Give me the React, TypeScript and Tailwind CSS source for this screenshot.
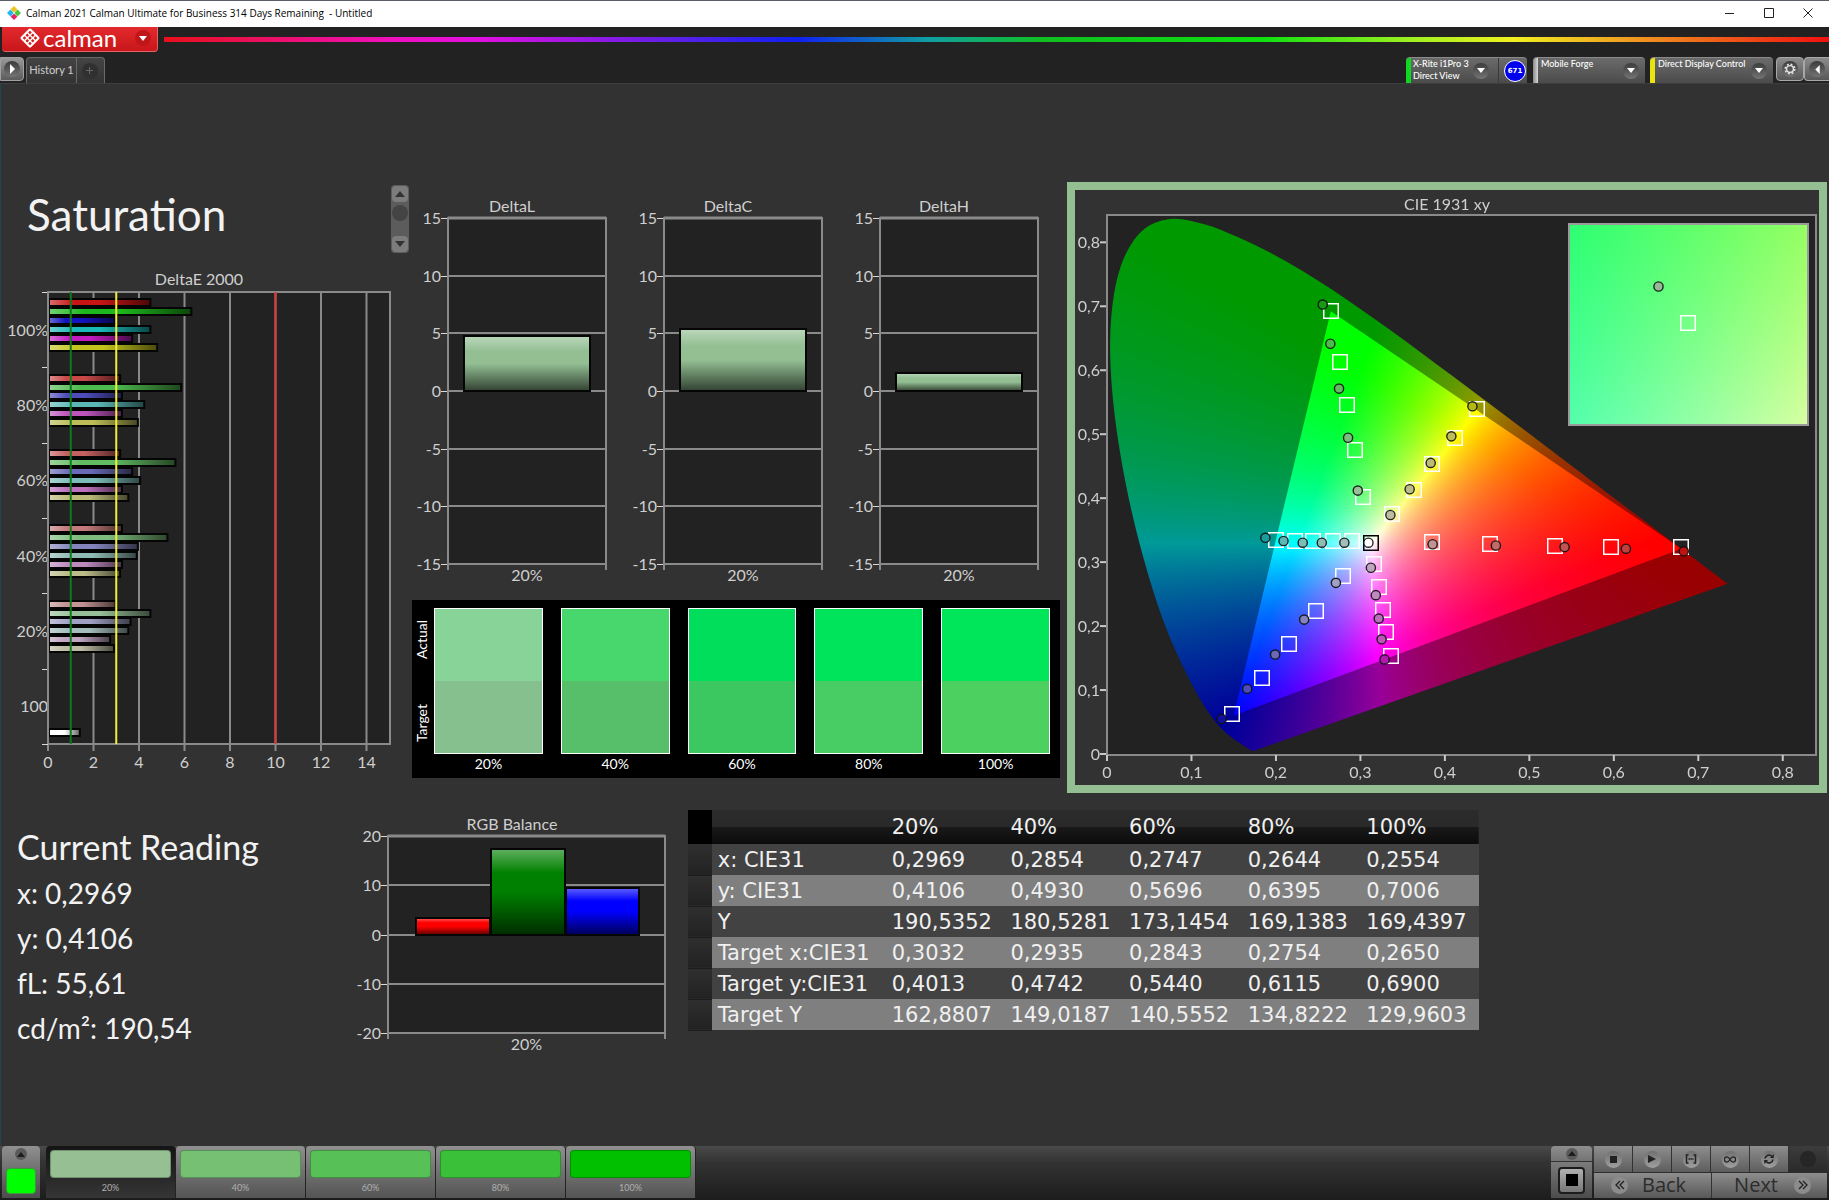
import { useEffect, useRef } from "react";
import type { ReactNode } from "react";

/* ---------- shared chart pieces ---------- */

const AXIS = "#8a8a8a";
const LABEL = "#cfcfcf";
const PLOT = "#222222";

function GlossDefs({ id }: { id: string }) {
  return (
    <defs>
      <linearGradient id={`${id}-v`} x1="0" y1="0" x2="0" y2="1">
        <stop offset="0" stopColor="#fff" stopOpacity="0.38" />
        <stop offset="0.28" stopColor="#fff" stopOpacity="0" />
        <stop offset="0.5" stopColor="#000" stopOpacity="0" />
        <stop offset="1" stopColor="#000" stopOpacity="0.66" />
      </linearGradient>
      <linearGradient id={`${id}-h`} x1="0" y1="0" x2="1" y2="0">
        <stop offset="0" stopColor="#fff" stopOpacity="0.38" />
        <stop offset="0.25" stopColor="#fff" stopOpacity="0" />
        <stop offset="0.5" stopColor="#000" stopOpacity="0" />
        <stop offset="1" stopColor="#000" stopOpacity="0.62" />
      </linearGradient>
    </defs>
  );
}

type Bar = { x: number; width: number; value: number; color: string };

type ColumnChartProps = {
  id: string;
  title: string;
  width: number;
  height: number;
  plot: { left: number; right: number; top: number; bottom: number };
  titleX: number;
  max: number;
  step: number;
  bars: Bar[];
};

function ColumnChart({ id, title, width, height, plot, titleX, max, step, bars }: ColumnChartProps) {
  const mid = (plot.top + plot.bottom) / 2;
  const unit = (plot.bottom - plot.top) / (2 * max);
  const yOf = (v: number) => Math.round(mid - v * unit);
  const ticks: number[] = [];
  for (let v = max; v >= -max; v -= step) ticks.push(v);
  return (
    <svg viewBox={`0 0 ${width} ${height}`} className="block h-auto w-full font-['Lato',sans-serif] text-[16px]" role="img" aria-label={title}>
      <GlossDefs id={id} />
      <text x={titleX} y={plot.top - 6} textAnchor="middle" fill={LABEL}>{title}</text>
      <rect x={plot.left} y={plot.top} width={plot.right - plot.left} height={plot.bottom - plot.top} fill={PLOT} />
      {ticks.map((v) => (
        <g key={v}>
          <line x1={plot.left} x2={plot.right} y1={yOf(v)} y2={yOf(v)} stroke={AXIS} strokeWidth={v === max ? 3 : 2} />
          <line x1={plot.left - 7} x2={plot.left} y1={yOf(v) + 0.5} y2={yOf(v) + 0.5} stroke="#d8d8d8" strokeWidth="1" />
          <text x={plot.left - 7} y={yOf(v) + 6} textAnchor="end" fill={LABEL}>{v}</text>
        </g>
      ))}
      <line x1={plot.left} x2={plot.left} y1={plot.top - 1} y2={plot.bottom + 6} stroke={AXIS} strokeWidth="2" />
      <line x1={plot.right} x2={plot.right} y1={plot.top - 1} y2={plot.bottom + 6} stroke={AXIS} strokeWidth="2" />
      {bars.map((b) => (
        <g key={b.x}>
          <rect x={b.x} y={yOf(b.value)} width={b.width} height={yOf(0) - yOf(b.value)} fill={b.color} />
          <rect x={b.x} y={yOf(b.value)} width={b.width} height={yOf(0) - yOf(b.value)} fill={`url(#${id}-v)`} stroke="#050505" strokeWidth="2" />
        </g>
      ))}
      <text x={(plot.left + plot.right) / 2} y={plot.bottom + 17} textAnchor="middle" fill={LABEL}>20%</text>
    </svg>
  );
}

/* ---------- DeltaE 2000 ---------- */

const deltaE = [
  { label: "100%", bars: [["#c81414", 4.5], ["#1db81d", 6.3], ["#1414c0", 2.95], ["#1ab8b8", 4.5], ["#c01ac0", 3.7], ["#c4c41e", 4.8]] },
  { label: "80%", bars: [["#c84848", 3.17], ["#4cba4c", 5.85], ["#4c4cba", 3.25], ["#5cb8b8", 4.23], ["#bc54bc", 3.25], ["#bcbc58", 3.95]] },
  { label: "60%", bars: [["#c46060", 3.17], ["#62bc62", 5.6], ["#6a6ab8", 3.7], ["#7cbcb8", 4.05], ["#bc70bc", 3.25], ["#bcbc78", 3.53]] },
  { label: "40%", bars: [["#c47a7a", 3.25], ["#7cbc7c", 5.25], ["#8484bc", 3.95], ["#90bab4", 3.9], ["#be8abe", 3.25], ["#bcbc8a", 3.17]] },
  { label: "20%", bars: [["#c49494", 2.97], ["#98c098", 4.5], ["#a0a0c4", 3.63], ["#a4bcbc", 3.53], ["#c0a4c0", 2.73], ["#bcbca4", 2.9]] },
  { label: "100", bars: [["#ffffff", 1.4]] },
] as { label: string; bars: [string, number][] }[];

function DeltaEChart() {
  const left = 48;
  const right = 390;
  const top = 22;
  const bottom = 474;
  const group = (bottom - top) / 6;
  const xOf = (v: number) => left + v * 22.75;
  return (
    <svg viewBox="0 0 412 510" className="block h-auto w-full font-['Lato',sans-serif] text-[16px]" role="img" aria-label="DeltaE 2000">
      <GlossDefs id="de" />
      <text x="199" y="15" textAnchor="middle" fill={LABEL}>DeltaE 2000</text>
      <rect x={left} y={top} width={right - left} height={bottom - top} fill={PLOT} stroke={AXIS} strokeWidth="2" />
      {[0, 2, 4, 6, 8, 10, 12, 14].map((v) => (
        <g key={v}>
          <line x1={xOf(v)} x2={xOf(v)} y1={top} y2={bottom + 7} stroke={AXIS} strokeWidth="2" />
          <text x={xOf(v)} y={bottom + 24} textAnchor="middle" fill={LABEL}>{v}</text>
        </g>
      ))}
      {[0, 1, 2, 3, 4, 5, 6].map((i) => (
        <line key={i} x1={left - 6} x2={left} y1={Math.round(top + i * group) + 0.5} y2={Math.round(top + i * group) + 0.5} stroke="#d8d8d8" />
      ))}
      {deltaE.map((g, gi) => (
        <g key={g.label}>
          <text x={left} y={top + (gi + 0.5) * group + 6} textAnchor="end" fill={LABEL}>{g.label}</text>
          {g.bars.map(([color, value], bi) => {
            const slot = g.bars.length === 1 ? 6 : bi;
            const y = Math.round(top + gi * group + 7.3 + slot * 8.9);
            return (
              <g key={bi}>
                <rect x={left + 1} y={y} width={xOf(value) - left - 1} height="7" fill={color} />
                <rect x={left + 1} y={y} width={xOf(value) - left - 1} height="7" fill="url(#de-h)" stroke="#050505" strokeWidth="2" />
              </g>
            );
          })}
        </g>
      ))}
      <line x1={left} x2={left} y1={top} y2={bottom} stroke={AXIS} strokeWidth="2" />
      <line x1={xOf(1)} x2={xOf(1)} y1={top} y2={bottom} stroke="#0e7a1c" strokeWidth="2" />
      <line x1={xOf(3)} x2={xOf(3)} y1={top} y2={bottom} stroke="#f2ee3c" strokeWidth="2" />
      <line x1={xOf(10)} x2={xOf(10)} y1={top} y2={bottom} stroke="#e03432" strokeWidth="2" />
    </svg>
  );
}

/* ---------- CIE 1931 xy ---------- */

type Point = [number, number];

const locus: Point[] = [
  [0.1741, 0.005], [0.1714, 0.0051], [0.1689, 0.0069], [0.1644, 0.0109], [0.1611, 0.0138], [0.1566, 0.0177],
  [0.151, 0.0227], [0.144, 0.0297], [0.1355, 0.0399], [0.1241, 0.0578], [0.1096, 0.0868], [0.0913, 0.1327],
  [0.0687, 0.2007], [0.0454, 0.295], [0.0235, 0.4127], [0.0082, 0.5384], [0.0039, 0.6548], [0.0139, 0.7502],
  [0.0389, 0.812], [0.0743, 0.8338], [0.1142, 0.8262], [0.1547, 0.8059], [0.1929, 0.7816], [0.2296, 0.7543],
  [0.2658, 0.7243], [0.3016, 0.6923], [0.3373, 0.6589], [0.3731, 0.6245], [0.4087, 0.5896], [0.4441, 0.5547],
  [0.4788, 0.5202], [0.5125, 0.4866], [0.5448, 0.4544], [0.5752, 0.4242], [0.6029, 0.3965], [0.627, 0.3725],
  [0.6482, 0.3514], [0.6658, 0.334], [0.6915, 0.3083], [0.7079, 0.292], [0.719, 0.2809], [0.726, 0.274],
  [0.7347, 0.2653],
];
const gamut: Point[] = [[0.68, 0.32], [0.265, 0.69], [0.15, 0.06]];

const series: { colors: string[]; target: Point[]; actual: Point[] }[] = [
  {
    colors: ["#98c098", "#7cbc7c", "#62bc62", "#4cba4c", "#169a16"],
    target: [[0.3032, 0.4013], [0.2935, 0.4742], [0.2843, 0.544], [0.2754, 0.6115], [0.265, 0.69]],
    actual: [[0.2969, 0.4106], [0.2854, 0.493], [0.2747, 0.5696], [0.2644, 0.6395], [0.2554, 0.7006]],
  },
  {
    colors: ["#c09494", "#c06a6a", "#c05454", "#c04040", "#c01414"],
    target: [[0.385, 0.33], [0.454, 0.327], [0.53, 0.325], [0.597, 0.323], [0.68, 0.3226]],
    actual: [[0.3855, 0.327], [0.4604, 0.325], [0.5417, 0.3226], [0.6143, 0.32], [0.6828, 0.316]],
  },
  {
    colors: ["#a4bcbc", "#90bab4", "#7cbcb8", "#5cb8b8", "#1a9c9c"],
    target: [[0.29, 0.332], [0.267, 0.332], [0.244, 0.332], [0.223, 0.332], [0.2, 0.334]],
    actual: [[0.281, 0.3294], [0.2543, 0.3294], [0.2317, 0.3294], [0.209, 0.332], [0.1875, 0.337]],
  },
  {
    colors: ["#a0a0c4", "#8484bc", "#6a6ab8", "#4c4cba", "#10109c"],
    target: [[0.279, 0.278], [0.2473, 0.223], [0.2154, 0.1715], [0.184, 0.118], [0.148, 0.062]],
    actual: [[0.271, 0.2668], [0.2334, 0.2095], [0.199, 0.155], [0.166, 0.1016], [0.1359, 0.0547]],
  },
  {
    colors: ["#c0a4c0", "#be8abe", "#bc70bc", "#bc54bc", "#b01ab0"],
    target: [[0.3164, 0.2955], [0.3217, 0.2606], [0.3269, 0.2246], [0.3298, 0.1897], [0.3362, 0.1522]],
    actual: [[0.3124, 0.2903], [0.3182, 0.2476], [0.3217, 0.2111], [0.3251, 0.1788], [0.3286, 0.1475]],
  },
  {
    colors: ["#bcbca4", "#bcbc8a", "#bcbc78", "#bcbc58", "#b8b814"],
    target: [[0.337, 0.3735], [0.3631, 0.4113], [0.3849, 0.4517], [0.4116, 0.4933], [0.4376, 0.5376]],
    actual: [[0.3355, 0.3726], [0.3583, 0.4127], [0.3832, 0.4538], [0.4077, 0.4952], [0.4326, 0.542]],
  },
];

const CIE_W = 744;
const CIE_H = 595;
const SCALE_X = 844.7;
const SCALE_Y = 641.5;
const cieX = (x: number) => 32 + x * SCALE_X;
const cieY = (y: number) => 564 - y * SCALE_Y;
const tickY = (y: number) => 564 - y * 639.6;
const INSET = { x: 494, y: 34, w: 239, h: 201 };

function chromaticity(x: number, y: number): [number, number, number] {
  const yy = Math.max(y, 0.001);
  const X = x / yy;
  const Z = (1 - x - yy) / yy;
  const r = Math.max(0, 3.2406 * X - 1.5372 - 0.4986 * Z);
  const g = Math.max(0, -0.9689 * X + 1.8758 + 0.0415 * Z);
  const b = Math.max(0, 0.0557 * X - 0.204 + 1.057 * Z);
  const m = Math.max(r, g, b, 0.0001);
  return [(r / m) * 255, (g / m) * 255, (b / m) * 255];
}

function fillLayer(w: number, h: number, at: (px: number, py: number) => Point, gain: number) {
  const layer = document.createElement("canvas");
  layer.width = w;
  layer.height = h;
  const ctx = layer.getContext("2d")!;
  const image = ctx.createImageData(w, h);
  for (let py = 0; py < h; py++) {
    for (let px = 0; px < w; px++) {
      const [x, y] = at(px, py);
      const [r, g, b] = chromaticity(x, y);
      const i = (py * w + px) * 4;
      image.data[i] = r * gain;
      image.data[i + 1] = g * gain;
      image.data[i + 2] = b * gain;
      image.data[i + 3] = 255;
    }
  }
  ctx.putImageData(image, 0, 0);
  return layer;
}

/* Catmull-Rom curve through every point of the spectral locus. */
function traceLocus(ctx: CanvasRenderingContext2D) {
  const pts = locus.map(([x, y]): Point => [cieX(x), cieY(y)]);
  ctx.beginPath();
  ctx.moveTo(pts[0][0], pts[0][1]);
  for (let i = 0; i < pts.length - 1; i++) {
    const p0 = pts[Math.max(i - 1, 0)];
    const p1 = pts[i];
    const p2 = pts[i + 1];
    const p3 = pts[Math.min(i + 2, pts.length - 1)];
    ctx.bezierCurveTo(
      p1[0] + (p2[0] - p0[0]) / 6, p1[1] + (p2[1] - p0[1]) / 6,
      p2[0] - (p3[0] - p1[0]) / 6, p2[1] - (p3[1] - p1[1]) / 6,
      p2[0], p2[1],
    );
  }
  ctx.closePath();
}

function CieCanvas() {
  const ref = useRef<HTMLCanvasElement>(null);
  useEffect(() => {
    const ctx = ref.current?.getContext("2d");
    if (!ctx) return;
    ctx.fillStyle = PLOT;
    ctx.fillRect(32, 25, 709, 540);
    const at = (px: number, py: number): Point => [(px - 32) / SCALE_X, (564 - py) / SCALE_Y];

    ctx.save();
    traceLocus(ctx);
    ctx.clip();
    ctx.drawImage(fillLayer(CIE_W, CIE_H, at, 0.6), 0, 0);
    ctx.beginPath();
    gamut.forEach(([x, y], i) => (i ? ctx.lineTo(cieX(x), cieY(y)) : ctx.moveTo(cieX(x), cieY(y))));
    ctx.closePath();
    ctx.clip();
    ctx.drawImage(fillLayer(CIE_W, CIE_H, at, 1), 0, 0);
    ctx.restore();

    const zoomed = (px: number, py: number): Point => [
      0.3032 + (px - INSET.w / 2) / 4680,
      0.4013 - (py - INSET.h / 2) / 3980,
    ];
    ctx.drawImage(fillLayer(INSET.w, INSET.h, zoomed, 1), INSET.x, INSET.y);
  }, []);
  return <canvas ref={ref} width={CIE_W} height={CIE_H} className="absolute inset-0 h-full w-full" aria-hidden="true" />;
}

function TargetMark({ x, y, stroke = "#fff" }: { x: number; y: number; stroke?: string }) {
  return <rect x={Math.round(x) - 7.25} y={Math.round(y) - 7.25} width="14.5" height="14.5" fill="none" stroke={stroke} strokeWidth="1.5" />;
}

function ActualMark({ x, y, fill }: { x: number; y: number; fill: string }) {
  return <circle cx={x} cy={y} r="4.6" fill={fill} stroke="#111" strokeOpacity="0.9" strokeWidth="1.4" />;
}

function CieChart() {
  const marks = [0, 1, 2, 3, 4, 5, 6, 7, 8];
  const fmt = (v: number) => (v === 0 ? "0" : `0,${v}`);
  return (
    <figure className="relative">
      <CieCanvas />
      <svg viewBox={`0 0 ${CIE_W} ${CIE_H}`} className="relative block h-auto w-full font-['Lato',sans-serif] text-[16px]" role="img" aria-label="CIE 1931 xy">
        <text x="372" y="20" textAnchor="middle" fill={LABEL}>CIE 1931 xy</text>
        <rect x="32" y="25" width="709" height="540" fill="none" stroke={AXIS} strokeWidth="2" />
        {marks.map((v) => (
          <g key={v}>
            <line x1={cieX(v / 10)} x2={cieX(v / 10)} y1="565" y2="571" stroke="#c8c8c8" strokeWidth="2" />
            <text x={cieX(v / 10)} y="588" textAnchor="middle" fill={LABEL}>{fmt(v)}</text>
            <line x1="25" x2="31" y1={tickY(v / 10)} y2={tickY(v / 10)} stroke="#c8c8c8" strokeWidth="2" />
            <text x="25" y={tickY(v / 10) + 6} textAnchor="end" fill={LABEL}>{fmt(v)}</text>
          </g>
        ))}
        {series.map((s, si) => (
          <g key={si}>
            {s.target.map(([x, y], i) => <TargetMark key={i} x={cieX(x)} y={cieY(y)} />)}
            {s.actual.map(([x, y], i) => <ActualMark key={i} x={cieX(x)} y={cieY(y)} fill={s.colors[i]} />)}
          </g>
        ))}
        <TargetMark x={cieX(0.3127)} y={cieY(0.329)} stroke="#000" />
        <ActualMark x={cieX(0.3095)} y={cieY(0.3294)} fill="#fff" />
        <rect x={INSET.x} y={INSET.y} width={INSET.w} height={INSET.h} fill="none" stroke="#9a9a9a" strokeWidth="2" />
        <TargetMark x={613} y={133} />
        <ActualMark x={583.5} y={96.5} fill="#98b898" />
      </svg>
    </figure>
  );
}

/* ---------- swatches and table ---------- */

const swatches = [
  { label: "20%", actual: "bg-[#88d398]", target: "bg-[#87c08f]", tab: "bg-[#96c093]" },
  { label: "40%", actual: "bg-[#47d76d]", target: "bg-[#57bf69]", tab: "bg-[#76c074]" },
  { label: "60%", actual: "bg-[#00de5c]", target: "bg-[#3cc860]", tab: "bg-[#57c057]" },
  { label: "80%", actual: "bg-[#00e45c]", target: "bg-[#48cc64]", tab: "bg-[#3bc03a]" },
  { label: "100%", actual: "bg-[#00e65a]", target: "bg-[#4cd060]", tab: "bg-[#00c000]" },
];

function SwatchPanel() {
  return (
    <section className="mt-2 mr-[7px] flex bg-black pt-2 pr-[10px] pb-1 font-['Lato',sans-serif] text-[14px] text-white">
      <div className="flex h-[146px] w-[22px] flex-col items-start justify-between py-3">
        <span className="rotate-180 leading-5 [writing-mode:vertical-rl]">Actual</span>
        <span className="rotate-180 leading-5 [writing-mode:vertical-rl]">Target</span>
      </div>
      <div className="grid flex-1 grid-cols-5 gap-[18px]">
        {swatches.map((s) => (
          <div key={s.label}>
            <div className="flex h-[146px] flex-col border border-white">
              <div className={`flex-1 ${s.actual}`} />
              <div className={`flex-1 ${s.target}`} />
            </div>
            <p className="text-center leading-5">{s.label}</p>
          </div>
        ))}
      </div>
    </section>
  );
}

const rows = [
  ["x: CIE31", "0,2969", "0,2854", "0,2747", "0,2644", "0,2554"],
  ["y: CIE31", "0,4106", "0,4930", "0,5696", "0,6395", "0,7006"],
  ["Y", "190,5352", "180,5281", "173,1454", "169,1383", "169,4397"],
  ["Target x:CIE31", "0,3032", "0,2935", "0,2843", "0,2754", "0,2650"],
  ["Target y:CIE31", "0,4013", "0,4742", "0,5440", "0,6115", "0,6900"],
  ["Target Y", "162,8807", "149,0187", "140,5552", "134,8222", "129,9603"],
];

function ReadingsTable() {
  return (
    <table className="mt-4 w-full table-fixed border-collapse text-left font-['DejaVu_Sans',sans-serif] text-[21px] text-[#f0f0f0]">
      <colgroup>
        <col className="w-[3%]" />
        <col className="w-[22%]" />
        <col className="w-[15%]" />
        <col className="w-[15%]" />
        <col className="w-[15%]" />
        <col className="w-[15%]" />
        <col className="w-[15%]" />
      </colgroup>
      <thead>
        <tr className="h-[34px] bg-[linear-gradient(#2b2b2b,#292929_50%,#191919_50%,#0c0c0c)]">
          <td className="bg-black" />
          <td />
          {swatches.map((s) => (
            <th key={s.label} scope="col" className="p-0 pl-[6px] font-normal leading-[30px]">{s.label}</th>
          ))}
        </tr>
      </thead>
      <tbody>
        {rows.map(([name, ...values], i) => (
          <tr key={name} className={i % 2 ? "h-[31px] bg-[#7f7f7f]" : "h-[31px] bg-[#424242]"}>
            <td className="border-b border-[#1c1c1c] bg-linear-to-b from-[#2f2f2f] to-[#222]" />
            <th scope="row" className="p-0 pl-[6px] font-normal whitespace-nowrap leading-[30px]">{name}</th>
            {values.map((v, vi) => (
              <td key={vi} className="p-0 pl-[6px] leading-[30px]">{v}</td>
            ))}
          </tr>
        ))}
      </tbody>
    </table>
  );
}

/* ---------- window chrome ---------- */

function RoundDot({ children, className = "" }: { children?: ReactNode; className?: string }) {
  return (
    <span className={`flex size-4 shrink-0 items-center justify-center rounded-full bg-linear-to-b from-[#3c3c3c] to-[#757575] ${className}`}>
      {children}
    </span>
  );
}

function DownArrow() {
  return (
    <svg viewBox="0 0 8 5" className="h-[5px] w-2" aria-hidden="true">
      <path d="M0 0h8L4 5z" fill="#fff" />
    </svg>
  );
}

function TitleBar() {
  return (
    <header className="flex h-[27px] items-center border-t border-[#5a5f66] bg-white pr-[2px] pb-[2px] pl-[7px] text-black">
      <svg viewBox="0 0 14 14" className="size-[14px]" aria-hidden="true">
        <path d="M7 0l3.300 3.300L7 6.600 3.700 3.300z" fill="#f2c21a" />
        <path d="M3.500 3.500L7 7l-3.500 3.500L0 7z" fill="#22b6e8" />
        <path d="M10.500 3.500L14 7l-3.500 3.500L7 7z" fill="#4cc83a" />
        <path d="M7 7.400l3.300 3.300L7 14l-3.300-3.300z" fill="#e8206a" />
        <path d="M7 5.500L8.500 7 7 8.500 5.500 7z" fill="#fff" fillOpacity="0.6" />
      </svg>
      <h1 className="ml-[5px] flex-1 font-['Open_Sans',sans-serif] text-[10px] whitespace-pre">
        {"Calman 2021 Calman Ultimate for Business 314 Days Remaining  - Untitled"}
      </h1>
      <button aria-label="Minimize" className="flex h-full w-[39px] items-center justify-center">
        <svg viewBox="0 0 10 10" className="size-[10px]"><path d="M0 5.500h9" stroke="#222" /></svg>
      </button>
      <button aria-label="Maximize" className="flex h-full w-[39px] items-center justify-center">
        <svg viewBox="0 0 10 10" className="size-[10px]"><path d="M.5.5h9v9h-9z" fill="none" stroke="#222" /></svg>
      </button>
      <button aria-label="Close" className="flex h-full w-[39px] items-center justify-center">
        <svg viewBox="0 0 10 10" className="size-[10px]"><path d="M.5.5l9 9M9.500.5l-9 9" stroke="#222" /></svg>
      </button>
    </header>
  );
}

function BrandBar() {
  return (
    <div className="flex h-[29px] items-start bg-[#222]">
      <button className="ml-[2px] flex h-[25px] w-[156px] items-center rounded-b border-r border-b border-[#e89090]/60 bg-linear-to-b from-[#e32a2e] to-[#c81519] pb-[2px] pl-[18px] text-white">
        <svg viewBox="0 0 20 20" className="size-5" aria-hidden="true">
          <g transform="rotate(45 10 10)">
            <rect x="2.800" y="2.800" width="14.400" height="14.400" rx="1.800" fill="#fff" />
            {[4.8, 8.7, 12.6].map((cy) =>
              [4.8, 8.7, 12.6].map((cx) => <rect key={`${cx}-${cy}`} x={cx} y={cy} width="2.600" height="2.600" rx=".4" fill="#d4201f" />),
            )}
          </g>
        </svg>
        <span className="ml-[3px] font-['Lato',sans-serif] text-2xl leading-[22px]">calman</span>
        <span className="mr-[6px] ml-auto flex size-4 items-center justify-center rounded-full bg-[#c0161a]">
          <DownArrow />
        </span>
      </button>
      <div className="mt-[10px] ml-[6px] h-[5px] flex-1 bg-[linear-gradient(90deg,#e8101c,#f010c0_14%,#e010e0_19%,#5a20e8_31%,#1020f0_38%,#10a0a0_46%,#10c020_53%,#10e010_66%,#a0f020_75%,#f0f020_81%,#f09020_89%,#f01010)]" />
    </div>
  );
}

function Device({ children, bar, className }: { children: ReactNode; bar: string; className: string }) {
  return (
    <button
      aria-haspopup="listbox"
      className={`flex h-[26px] items-stretch rounded-t border-t border-[#8a8a8a] bg-linear-to-b from-[#6b6b6b] to-[#4b4b4b] text-left font-['Lato',sans-serif] text-[9px] leading-3 font-medium text-white ${className}`}
    >
      <span className={`w-[5px] shrink-0 rounded-tl ${bar}`} />
      {children}
    </button>
  );
}

function ToolRow() {
  return (
    <div className="flex h-[27px] items-end justify-between bg-[#222]">
      <nav className="flex items-end font-['Lato',sans-serif] text-[11px] text-[#d0d0d0]">
        <button aria-label="Play" className="mr-[2px] mb-[2px] flex h-6 w-6 items-center justify-center rounded-r border border-[#a0a0a0] bg-linear-to-b from-[#9a9a9a] to-[#5c5c5c]">
          <RoundDot><svg viewBox="0 0 6 10" className="h-[10px] w-[6px]"><path d="M1 0l5 5-5 5z" fill="#fff" /></svg></RoundDot>
        </button>
        <button className="h-[26px] w-[50px] rounded-tl border-t border-l border-[#6a6a6a] bg-linear-to-b from-[#444] to-[#333] whitespace-nowrap">History 1</button>
        <button aria-label="Add history" className="flex h-[26px] w-[29px] items-center justify-center rounded-tr border border-b-0 border-[#6a6a6a] bg-linear-to-b from-[#444] to-[#333] pr-[2px]">
          <span className="flex size-4 items-center justify-center rounded-full bg-[#303030]">
            <svg viewBox="0 0 7 7" className="size-[7px]"><path d="M3.500 0v7M0 3.500h7" stroke="#666" /></svg>
          </span>
        </button>
      </nav>
      <div className="flex items-end">
        <Device bar="bg-[#10d820]" className="mr-[6px] w-[121px]">
          <span className="ml-[2px] w-[60px] whitespace-nowrap">X-Rite i1Pro 3<br />Direct View</span>
          <RoundDot className="self-center"><DownArrow /></RoundDot>
          <span className="ml-[9px] w-px bg-[#3a3a3a]" />
          <span className="my-auto mr-px ml-auto flex size-[22px] items-center justify-center rounded-full border border-white bg-[#0000ee] font-['DejaVu_Sans',sans-serif] text-[7px] font-bold">671</span>
        </Device>
        <Device bar="bg-linear-to-r from-[#8a8a8a] to-[#d8d8d8]" className="mr-[5px] w-[112px]">
          <span className="ml-[3px] flex-1">Mobile Forge</span>
          <RoundDot className="mr-[6px] self-center"><DownArrow /></RoundDot>
        </Device>
        <Device bar="bg-[#e8e410]" className="mr-[3px] w-[123px]">
          <span className="ml-[3px] flex-1 whitespace-nowrap">Direct Display Control</span>
          <RoundDot className="mr-[6px] self-center"><DownArrow /></RoundDot>
        </Device>
        <button aria-label="Settings" className="mb-[2px] flex h-6 w-7 items-center justify-center rounded border border-[#a8a8a8] bg-linear-to-b from-[#8c8c8c] to-[#585858]">
          <RoundDot>
            <svg viewBox="0 0 14 14" className="size-3" aria-hidden="true">
              <circle cx="7" cy="7" r="4" fill="none" stroke="#e8e8e8" strokeWidth="1.600" />
              <circle cx="7" cy="7" r="5.600" fill="none" stroke="#e8e8e8" strokeWidth="1.800" strokeDasharray="2.200 2.198" />
            </svg>
          </RoundDot>
        </button>
        <button aria-label="Collapse" className="mb-[2px] flex h-6 w-[25px] items-center justify-center rounded-l border border-r-0 border-[#a8a8a8] bg-linear-to-b from-[#8c8c8c] to-[#585858]">
          <RoundDot><svg viewBox="0 0 5 10" className="h-[9px] w-[5px]"><path d="M5 0v10L0 5z" fill="#fff" /></svg></RoundDot>
        </button>
      </div>
    </div>
  );
}

function PageScroller() {
  return (
    <div className="flex h-[68px] w-[18px] flex-col items-center justify-between rounded-sm bg-[#5c5c5c] p-px">
      <button aria-label="Previous page" className="flex h-4 w-4 items-center justify-center rounded-sm bg-[#7c7c7c]">
        <svg viewBox="0 0 10 6" className="h-[6px] w-[10px]"><path d="M5 0l5 6H0z" fill="#333" /></svg>
      </button>
      <span className="mb-3 size-4 rounded-full bg-[#444]" />
      <button aria-label="Next page" className="flex h-4 w-4 items-center justify-center rounded-sm bg-[#7c7c7c]">
        <svg viewBox="0 0 10 6" className="h-[6px] w-[10px]"><path d="M0 0h10L5 6z" fill="#333" /></svg>
      </button>
    </div>
  );
}

function TransportButton({ label, children }: { label: string; children: ReactNode }) {
  return (
    <button aria-label={label} className="flex h-[26px] flex-1 items-center justify-center border-r border-[#333] bg-linear-to-b from-[#8e8e8e] to-[#5e5e5e] text-[#222]">
      <span className="flex size-[17px] items-center justify-center rounded-full bg-linear-to-b from-[#707070] to-[#a0a0a0]">{children}</span>
    </button>
  );
}

function UpDot() {
  return (
    <span className="flex size-3 items-center justify-center rounded-full bg-[#5a5a5a]">
      <svg viewBox="0 0 8 5" className="h-[5px] w-2"><path d="M4 0l4 5H0z" fill="#1c1c1c" /></svg>
    </span>
  );
}

function BottomBar() {
  return (
    <footer className="flex h-[54px] items-start bg-[linear-gradient(#4a4a4a,#333_30%,#1c1c1c)] pr-[2px] pb-[2px] pl-[2px]">
      <button aria-label="Pattern color" className="mr-[6px] flex h-[52px] w-[38px] flex-col items-center rounded-t bg-linear-to-b from-[#909090] to-[#4c4c4c]">
        <span className="mt-[2px] mb-2"><UpDot /></span>
        <span className="h-[26px] w-[30px] rounded-sm border border-[#3a9a3a] bg-[#00ff00]" />
      </button>
      {swatches.map((s, i) => (
        <button
          key={s.label}
          aria-pressed={i === 0}
          className={
            i === 0
              ? "flex h-[52px] w-[130px] flex-col items-center rounded-t border-r border-[#222] bg-linear-to-b from-[#141414] to-[#363636] px-1 pt-1"
              : "flex h-[52px] w-[130px] flex-col items-center rounded-t border-r border-[#222] bg-linear-to-b from-[#909090] to-[#545454] px-1 pt-1"
          }
        >
          <span className={`h-8 w-full rounded border border-black/25 ${s.tab}`} />
          <span className="font-['Lato',sans-serif] text-[9px] leading-5 text-[#b0b0b0]">{s.label}</span>
        </button>
      ))}
      <div className="ml-auto flex h-[52px]">
        <div className="mr-[2px] flex w-[41px] flex-col">
          <button aria-label="Expand" className="flex h-4 items-center justify-center rounded-t border-b border-[#333] bg-linear-to-b from-[#8e8e8e] to-[#747474]"><UpDot /></button>
          <button aria-label="Read single" className="flex flex-1 items-center justify-center bg-linear-to-b from-[#7c7c7c] to-[#4c4c4c]">
            <span className="flex size-[27px] items-center justify-center rounded border-2 border-[#1c1c1c] bg-linear-to-b from-[#b0b0b0] to-[#777]">
              <span className="size-3 bg-black" />
            </span>
          </button>
        </div>
        <div className="flex w-[233px] flex-col gap-[1px]">
          <div className="flex">
            <TransportButton label="Stop"><span className="size-[7px] bg-[#222]" /></TransportButton>
            <TransportButton label="Play"><svg viewBox="0 0 8 8" className="size-2"><path d="M0 0l8 4-8 4z" fill="#222" /></svg></TransportButton>
            <TransportButton label="Read series">
              <svg viewBox="0 0 12 10" className="h-[10px] w-3"><path d="M3.500 1H1.500v8h2M8.500 1h2v8h-2" fill="none" stroke="#222" strokeWidth="1.500" /><path d="M3.500 5h5" stroke="#222" strokeWidth="1.500" strokeDasharray="1.500 .4" /></svg>
            </TransportButton>
            <TransportButton label="Read continuous">
              <svg viewBox="0 0 14 8" className="h-[7px] w-3"><path d="M7 4C5.500 1.500 4.500 1 3.400 1a3 3 0 000 6C4.500 7 5.500 6.500 7 4s2.500-3 3.600-3a3 3 0 010 6C9.500 7 8.500 6.500 7 4z" fill="none" stroke="#222" strokeWidth="1.500" /></svg>
            </TransportButton>
            <TransportButton label="Refresh">
              <svg viewBox="0 0 12 12" className="size-3"><path d="M2 5.500a4 4 0 017-2M10 6.500a4 4 0 01-7 2" fill="none" stroke="#222" strokeWidth="1.600" /><path d="M10.800 1v4H7zM1.200 11V7H5z" fill="#222" /></svg>
            </TransportButton>
            <span className="flex h-[26px] flex-1 items-center justify-center bg-linear-to-b from-[#3c3c3c] to-[#2a2a2a]"><span className="size-4 rounded-full bg-[#262626]" /></span>
          </div>
          <div className="flex font-['Open_Sans',sans-serif] text-xl leading-[22px] font-medium text-[#2c2c2c]">
            <button className="flex h-[25px] flex-1 items-center gap-[14px] border-r border-[#333] bg-linear-to-b from-[#8e8e8e] to-[#585858] pb-px pl-[17px]">
              <span className="flex size-[17px] items-center justify-center rounded-full bg-[#8c8c8c]">
                <svg viewBox="0 0 10 10" className="size-[10px]"><path d="M5 1L1 5l4 4M9 1L5 5l4 4" fill="none" stroke="#222" strokeWidth="1.300" /></svg>
              </span>
              Back
            </button>
            <button className="flex h-[25px] flex-1 items-center justify-end gap-4 bg-linear-to-b from-[#8e8e8e] to-[#585858] pr-4 pb-px">
              Next
              <span className="flex size-[17px] items-center justify-center rounded-full bg-[#8c8c8c]">
                <svg viewBox="0 0 10 10" className="size-[10px]"><path d="M1 1l4 4-4 4M5 1l4 4-4 4" fill="none" stroke="#222" strokeWidth="1.300" /></svg>
              </span>
            </button>
          </div>
        </div>
      </div>
    </footer>
  );
}

/* ---------- page ---------- */

const deltaPlot = { left: 36, right: 194, top: 36, bottom: 382 };
const deltas = [
  { title: "DeltaL", value: 4.8 },
  { title: "DeltaC", value: 5.4 },
  { title: "DeltaH", value: 1.55 },
];

export default function App() {
  return (
    <div className="flex min-h-screen flex-col bg-[#323232]">
      <TitleBar />
      <BrandBar />
      <ToolRow />
      <main className="flex-1 border-t border-[#3e3e3e] pt-[98px] shadow-[inset_1px_0_0_#1f4456]">
        <div className="grid grid-cols-[412fr_655fr_762fr]">
          <section>
            <div className="flex h-[88px] items-start justify-between pt-[3px] pr-[3px] pl-[27px]">
              <h2 className="font-['Lato',sans-serif] text-[44px] leading-[58px] text-[#f2f2f2]">Saturation</h2>
              <PageScroller />
            </div>
            <DeltaEChart />
          </section>
          <section>
            <div className="mr-[7px] grid grid-cols-3">
              {deltas.map((d) => (
                <ColumnChart
                  key={d.title}
                  id={d.title}
                  title={d.title}
                  width={216}
                  height={410}
                  plot={deltaPlot}
                  titleX={100}
                  max={15}
                  step={5}
                  bars={[{ x: 52, width: 126, value: d.value, color: "#93bf93" }]}
                />
              ))}
            </div>
            <SwatchPanel />
          </section>
          <section className="mr-[2px] border-8 border-[#93bf93]">
            <CieChart />
          </section>
        </div>
        <div className="mt-px grid grid-cols-[344fr_344fr_791fr_350fr]">
          <section className="pt-7 pl-[17px] font-['Lato',sans-serif] text-[28px] leading-[45px] whitespace-nowrap text-[#f2f2f2]">
            <h3 className="text-[34px] leading-[49px]">Current Reading</h3>
            <p>x: 0,2969</p>
            <p>y: 0,4106</p>
            <p>fL: 55,61</p>
            <p>cd/m²: 190,54</p>
          </section>
          <section className="pt-3">
            <ColumnChart
              id="rgb"
              title="RGB Balance"
              width={344}
              height={260}
              plot={{ left: 44, right: 321, top: 30, bottom: 227 }}
              titleX={168}
              max={20}
              step={10}
              bars={[
                { x: 72, width: 74, value: 3.3, color: "#ff0000" },
                { x: 147, width: 74, value: 17.3, color: "#008000" },
                { x: 222, width: 73, value: 9.4, color: "#0000ff" },
              ]}
            />
          </section>
          <section>
            <ReadingsTable />
          </section>
        </div>
      </main>
      <BottomBar />
    </div>
  );
}
